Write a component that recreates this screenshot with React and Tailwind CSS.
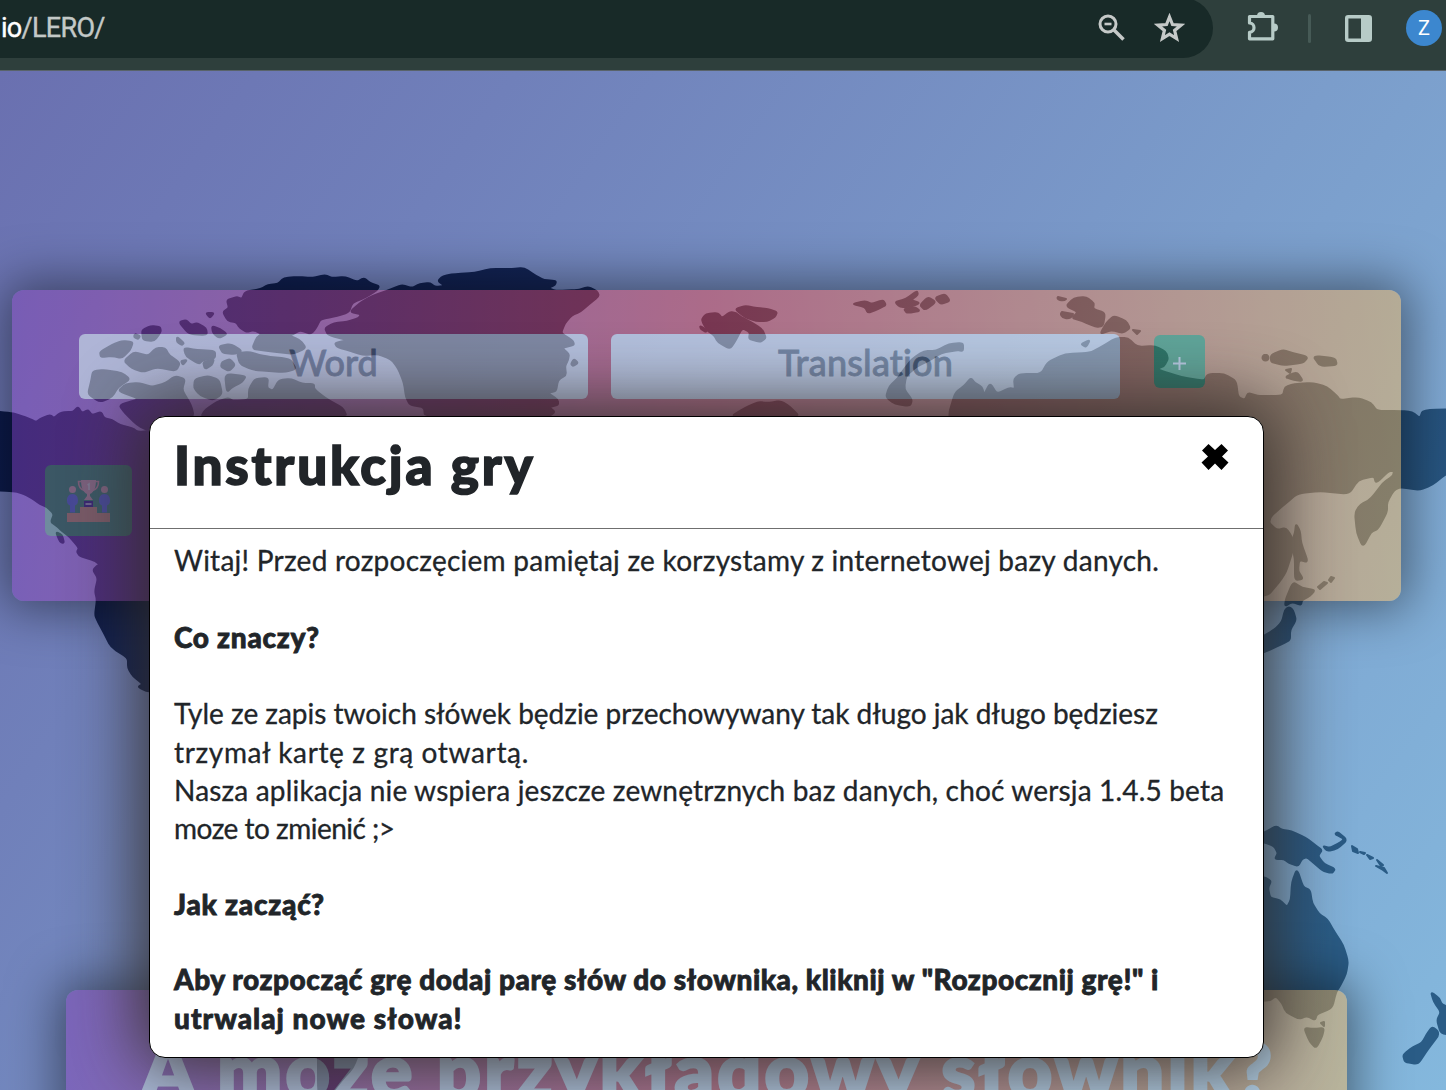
import React from "react";

const LAND = [
  // Alaska, Canada and the west coast
  "M-14 411 L12 413 L22 416 L30 419 L36 422 L42 418 L50 415 L54 418 L60 413 L66 412 L73 412 L78 407 L82 413 L88 410 L92 415 L101 412 L104 418 L112 420 L120 425 L132 428 L138 432 L150 431 L400 440 L400 720 L149 692 L138 687 L143 684 L133 676 L128 668 L128 658 L111 647 L105 635 L98 622 L95 615 L97 600 L95 591 L98 578 L93 570 L98 565 L102 568 L96 561 L80 556 L77 552 L79 548 L70 537 L62 531 L57 526 L51 522 L54 514 L47 507 L40 504 L33 499 L24 494 L14 491 L-14 490Z",
  "M56 532 L62 535 L64 543 L60 542Z",
  // Ellesmere
  "M261 289 L268 285 L278 284 L284 278 L298 277 L312 278 L325 275 L332 278 L345 277 L357 282 L364 278 L370 283 L379 286 L377 290 L366 297 L352 303 L349 312 L337 316 L326 318 L320 320 L316 328 L311 334 L300 330 L290 336 L278 332 L264 335 L254 330 L247 332 L240 328 L236 322 L228 321 L223 312 L229 308 L227 300 L237 297 L242 299 L245 292Z",
  // Greenland
  "M392 289 L402 285 L412 288 L420 284 L430 283 L435 287 L445 286 L438 281 L443 276 L455 274 L475 273 L490 269 L511 269 L524 268 L536 276 L544 280 L556 281 L555 285 L548 288 L556 291 L578 290 L588 287 L597 291 L599 296 L589 304 L580 312 L572 315 L565 323 L561 333 L567 337 L573 341 L574 345 L562 348 L569 354 L568 360 L565 366 L566 375 L558 380 L556 391 L548 393 L558 400 L558 405 L549 407 L555 412 L548 417 L425 417 L424 407 L410 405 L406 397 L404 383 L398 368 L391 359 L378 354 L363 355 L351 351 L337 347 L335 343 L347 340 L328 335 L325 328 L334 323 L347 322 L359 318 L361 314 L350 312 L360 303 L372 296Z",
  "M571 364 L574 359 L578 363 L573 366Z",
  "M257 337 L268 330 L285 334 L300 340 L306 348 L293 354 L270 351 L252 349Z",
  "M237 353 L250 352 L262 356 L290 359 L296 369 L285 372 L253 370 L240 364Z",
  "M100 352 L112 345 L122 341 L133 342 L130 350 L122 358 L112 356 L101 357Z",
  "M124 361 L134 352 L148 356 L156 348 L165 348 L169 355 L180 363 L176 371 L157 367 L143 372 L132 368Z",
  "M142 330 L151 326 L160 327 L161 332 L154 341 L143 340Z",
  "M179 322 L186 320 L191 325 L197 323 L206 328 L207 335 L189 334Z",
  "M212 326 L220 329 L227 334 L219 338 L213 333Z",
  "M206 313 L214 313 L210 318Z",
  "M184 348 L197 350 L215 351 L215 358 L203 360 L199 364 L186 356Z",
  "M219 346 L231 344 L242 351 L235 354 L223 353Z",
  "M177 337 L184 343 L182 345 L177 342Z",
  "M135 334 L140 336 L138 339 L134 337Z",
  "M222 362 L230 359 L235 365 L229 371 L221 367Z",
  "M203 362 L214 359 L212 365 L205 369Z",
  "M181 361 L187 360 L183 365Z",
  "M93 371 L105 370 L122 373 L130 379 L118 387 L112 397 L100 402 L88 394 L91 382Z",
  "M118 391 L126 384 L139 383 L152 387 L166 383 L175 376 L185 379 L182 390 L191 405 L194 417 L149 431 L137 425 L125 413 L119 405 L140 399Z",
  "M195 379 L208 376 L219 380 L222 394 L213 400 L200 395 L194 388Z",
  "M225 374 L246 376 L242 382 L232 387 L227 392Z",
  "M249 389 L255 379 L268 378 L267 388 L273 391 L279 380 L291 379 L302 384 L314 384 L314 389 L325 398 L343 408 L347 417 L201 417 L205 410 L217 402 L228 398 L233 401 L249 400Z",
  // Svalbard and Arctic islands
  "M702 319 L706 314 L718 313 L722 318 L730 312 L736 313 L741 317 L749 321 L762 329 L766 338 L760 342 L749 339 L750 332 L742 328 L736 340 L730 349 L718 342 L714 335 L708 331 L703 323Z",
  "M735 309 L745 306 L757 308 L768 309 L777 312 L775 317 L767 321 L756 321 L745 317Z",
  "M700 326 L707 330 L706 332 L701 329Z",
  "M852 304 L865 301 L872 304 L883 300 L886 305 L878 309 L868 313 L865 307Z",
  "M895 302 L906 299 L917 291 L918 295 L911 300 L920 303 L910 307 L900 307Z",
  "M904 309 L915 307 L920 311 L907 313Z",
  "M920 305 L928 297 L936 302 L925 310Z",
  "M935 298 L945 294 L950 301 L941 304Z",
  // Nordic coast
  "M963 343 L949 344 L936 351 L924 351 L912 359 L902 372 L898 378 L889 387 L886 397 L895 404 L910 406 L912 400 L904 389 L906 376 L916 367 L930 360 L941 353 L957 350 L963 351Z",
  "M730 417 L745 408 L758 402 L768 403 L781 401 L790 407 L800 417Z",
  // Novaya and Severnaya Zemlya
  "M1066 306 L1074 298 L1086 297 L1094 303 L1093 309 L1105 313 L1103 326 L1096 327 L1082 321 L1072 318 L1078 312Z",
  "M1100 334 L1107 322 L1114 316 L1126 321 L1130 328 L1123 333 L1111 330Z",
  "M1058 297 a4 2 0 1 0 8 2Z",
  "M1062 312 a6 4 0 1 0 11 2Z",
  "M1133 330 l7 1 l-3 3Z",
  "M1081 344 L1090 340 L1086 347Z",
  // Eurasia
  "M955 393 L964 386 L971 378 L975 383 L982 387 L984 395 L990 383 L997 394 L1009 388 L1015 389 L1014 379 L1020 374 L1041 374 L1048 362 L1065 354 L1090 353 L1103 346 L1116 338 L1128 338 L1137 347 L1155 346 L1166 352 L1168 359 L1164 366 L1157 369 L1165 372 L1181 377 L1204 381 L1208 374 L1224 374 L1236 381 L1238 397 L1245 400 L1248 393 L1259 396 L1283 396 L1285 387 L1294 384 L1313 383 L1327 387 L1337 396 L1340 400 L1358 398 L1371 403 L1377 411 L1401 411 L1412 412 L1420 418 L1423 410 L1466 409 L1466 461 L1446 474 L1432 485 L1419 490 L1401 487 L1394 490 L1387 502 L1387 512 L1378 529 L1371 532 L1363 547 L1357 533 L1355 513 L1360 505 L1371 499 L1383 483 L1393 476 L1394 471 L1389 471 L1376 483 L1374 476 L1358 480 L1349 494 L1322 491 L1298 493 L1285 504 L1271 516 L1269 523 L1277 530 L1286 528 L1292 537 L1293 550 L1285 575 L1264 600 L960 620 L948 417Z",
  "M1296 524 L1300 531 L1301 543 L1308 562 L1299 560 L1298 571 L1303 579 L1295 580 L1295 558 L1291 543 L1295 533Z",
  "M1293 582 L1302 588 L1315 590 L1310 596 L1302 600 L1301 605 L1292 602 L1285 606 L1286 599Z",
  "M1289 607 L1293 610 L1296 620 L1290 630 L1290 640 L1282 644 L1265 652 L1250 655 L1250 644 L1274 630 L1282 622 L1285 610Z",
  "M1318 587 l6 -5 l3 1 l-7 6Z", "M1329 580 l2 -3 l3 1 l-3 4Z",
  "M1271 355 L1283 350 L1293 353 L1308 357 L1303 363 L1283 365 L1271 362Z",
  "M1313 356 L1335 358 L1337 365 L1320 366Z", "M1264 355 a3 3 0 1 0 3 0Z", "M1285 377 L1297 372 L1303 381 L1294 380Z", "M1286 370 l5 -1 l-1 4Z",
  // New Guinea and neighbours
  "M1240 840 L1264 833 L1276 826 L1282 830 L1291 831 L1306 838 L1315 845 L1322 850 L1318 856 L1324 864 L1335 869 L1332 873 L1323 871 L1307 857 L1302 859 L1298 866 L1289 863 L1284 859 L1275 859 L1278 853 L1274 846 L1264 842 L1240 842Z",
  "M1323 846 L1330 848 L1341 842 L1344 839 L1335 834 L1338 832 L1347 840 L1337 849 L1327 851Z",
  "M1352 846 l5 3 l1 4 l-5 -2Z", "M1360 852 l5 1 l-1 1Z", "M1367 855 l6 3 l-3 1Z", "M1377 860 l6 5 l-2 1Z", "M1376 866 l8 2 l3 5 l-4 -3Z",
  // Australia and Tasmania
  "M1240 877 L1264 877 L1271 881 L1268 888 L1270 898 L1280 900 L1287 907 L1291 900 L1292 882 L1297 869 L1303 887 L1310 890 L1312 903 L1319 914 L1327 919 L1334 931 L1343 945 L1348 961 L1346 974 L1340 986 L1336 992 L1332 1008 L1317 1014 L1315 1020 L1307 1016 L1299 1019 L1286 1012 L1282 1003 L1276 996 L1269 1001 L1240 1000Z",
  "M1304 1028 L1314 1029 L1324 1028 L1322 1037 L1316 1048 L1310 1042Z", "M1321 1023 l3 -1 l0 4Z",
  // New Zealand
  "M1431 992 L1439 998 L1442 1005 L1460 1010 L1460 1034 L1441 1034 L1437 1020 L1441 1012 L1434 1002Z",
  "M1432 1027 L1438 1031 L1438 1036 L1431 1045 L1426 1052 L1418 1064 L1405 1062 L1403 1055 L1413 1047 L1422 1043 L1427 1034Z",
  // Coast behind the lower card
  "M318 1040 L360 1050 L353 1068 L342 1080 L328 1098 L318 1098Z",
];

// Rounds an outline's corners: short curves with the vertices as controls, joined by straight runs.
function soften(d) {
  if (!d.includes("L")) return d;
  const n = d.match(/-?\d+/g).map(Number);
  const pts = [];
  for (let i = 0; i < n.length; i += 2) pts.push([n[i], n[i + 1]]);
  const mix = (a, b, t) => (a[0] + (b[0] - a[0]) * t).toFixed(1) + " " + (a[1] + (b[1] - a[1]) * t).toFixed(1);
  return (
    pts
      .map((p, i) => {
        const prev = pts[(i + pts.length - 1) % pts.length];
        const next = pts[(i + 1) % pts.length];
        return (i ? "L" : "M") + mix(p, prev, 0.3) + "Q" + p[0] + " " + p[1] + " " + mix(p, next, 0.3);
      })
      .join("") + "Z"
  );
}

function WorldMap() {
  return (
    <svg className="pointer-events-none absolute inset-0 -z-10 h-full w-full" viewBox="0 71 1446 1019" aria-hidden="true">
      <defs>
        <linearGradient id="land" gradientUnits="userSpaceOnUse" x1="0" y1="300" x2="1300" y2="1000">
          <stop offset="0" stopColor="#0c1a4c" />
          <stop offset="0.35" stopColor="#142556" />
          <stop offset="1" stopColor="#2a5c86" />
        </linearGradient>
      </defs>
      <g fill="url(#land)" stroke="url(#land)" strokeWidth="2" strokeLinejoin="round">
        {LAND.map((d, i) => (
          <path key={i} d={soften(d)} />
        ))}
      </g>
    </svg>
  );
}

function BrowserBar() {
  return (
    <header className="flex h-[71px] items-start justify-between border-b border-[#59636a] bg-[#2e3f3c]">
      <div className="-mt-0.5 flex h-[60px] w-[1213px] items-center rounded-r-full bg-[#182a28]">
        <div className="mt-px w-[1098px] whitespace-nowrap pl-px font-['Roboto','sans-serif'] text-[27px] tracking-[-0.7px] text-[#c3c9c7] [-webkit-text-stroke:0.4px]">
          <span className="text-white">io</span>/LERO/
        </div>
        <svg className="h-7 w-7" viewBox="0 0 28 28" fill="none" stroke="#c5c9c8">
          <circle cx="10" cy="10" r="8" strokeWidth="3" />
          <path d="M6.500 10h7" strokeWidth="2.600" />
          <path d="M16 16l9.500 9.500" strokeWidth="3.600" />
        </svg>
        <svg className="ml-[28px] h-[30px] w-[31px]" viewBox="0 0 31 30" fill="none" stroke="#c5c9c8" strokeWidth="3.200">
          <path d="M15.500 4l3 7.500 8.600.6-6.500 5.300 2 8.200-7.100-4.400-7.100 4.400 2-8.200-6.500-5.300 8.600-.6z" />
        </svg>
      </div>
      <div className="flex h-[56px] flex-1 items-center pl-[33px]">
        <svg className="-mt-1 h-[32px] w-[34px]" viewBox="0 0 34 32" fill="none" stroke="#b7cbc7" strokeWidth="3.200">
          <path d="M3.500 6.500h23.300v22.300H3.500v-6.500c6-.2 6-9 0-9.300z" strokeLinejoin="round" />
          <path d="M11 6a4 4 0 0 1 8 0zM28 13.500a4 4 0 0 1 0 8z" fill="#b7cbc7" stroke="none" />
        </svg>
        <div className="ml-[28px] h-[29px] w-[3px] rounded bg-[#465a56]" />
        <svg className="ml-[34px] h-[27px] w-[27px]" viewBox="0 0 27 27">
          <rect x="1.700" y="1.700" width="23.600" height="23.600" rx="1.500" fill="none" stroke="#b7cbc7" strokeWidth="3.400" />
          <path d="M16 1h10v25H16z" fill="#b7cbc7" />
        </svg>
        <div className="ml-[34px] flex h-9 w-9 shrink-0 items-center justify-center rounded-full bg-[#3c87cf] font-['Roboto','sans-serif'] text-[20px] text-white">Z</div>
      </div>
    </header>
  );
}

function TrophyIcon() {
  return (
    <svg className="mt-px h-[43px] w-[43px]" viewBox="0 0 43 43">
      <path d="M0 33h13v-6h17v6h13v9H0z" fill="#fba487" />
      <circle cx="5.500" cy="9.500" r="3.500" fill="#ffb3b6" />
      <circle cx="37.500" cy="9.500" r="3.500" fill="#ffb3b6" />
      <path d="M5.500 14c-4 0-5.500 3-5.500 6.500 0 3 1 4 3 5v7h5v-7c2-1 3-2 3-5 0-3.500-1.500-6.500-5.500-6.500zM37.500 14c-4 0-5.500 3-5.500 6.500 0 3 1 4 3 5v7h5v-7c2-1 3-2 3-5 0-3.500-1.500-6.500-5.500-6.500z" fill="#8c80ec" />
      <path d="M14.500 1.500h-3c0 5 2 8 6 9M28.500 1.500h3c0 5-2 8-6 9" fill="none" stroke="#ffaaab" strokeWidth="1.600" />
      <path d="M14 0h15c0 8-2 12-6 14v2l3 4h-9l3-4v-2c-4-2-6-6-6-14z" fill="#ffb3b6" />
      <path d="M20.500 5l1.500-1v6" fill="none" stroke="#ffe8e4" strokeWidth="1.500" />
      <path d="M17 21h9v6h-9z" fill="#70359c" />
      <path d="M18.500 24h6" stroke="#ffe4ec" strokeWidth="1.500" />
    </svg>
  );
}

const CARD =
  "rounded-xl bg-[linear-gradient(90deg,#873fb8_0%,#ef4446_50%,#f8b552_100%)] opacity-45 shadow-[0_0_50px_8px_#000]";

const LINE = "block h-[38.2px] whitespace-nowrap leading-[38.2px]";

function Instructions() {
  return (
    <section className="absolute left-[149px] top-[345px] h-[642px] w-[1115px] rounded-2xl border border-black bg-white font-['Lato','sans-serif'] text-[#212529] shadow-[0_0_70px_10px_rgba(50,45,40,0.92)]">
      <div className="flex h-[112px] items-start justify-between border-b border-[#6f6f6f] pl-6 pr-[34px]">
        <h1 className="mt-[15px] whitespace-nowrap text-[53px] font-black leading-[66px] tracking-[2.8px] [-webkit-text-stroke:1.6px]">Instrukcja gry</h1>
        <button className="mt-[26px]" aria-label="Zamknij">
          <svg className="h-[28px] w-[28px]" viewBox="0 0 28 28">
            <path d="M7.500 1L14 7l6.500-6L27 7.500 21 13.500l6.500 6L20.500 27 14 20.500 7.500 27 .5 19.500l6.500-6-6-6z" fill="#000" />
          </svg>
        </button>
      </div>
      <div className="pl-6 pt-[12px] text-[28px] [-webkit-text-stroke:0.3px]">
        <p>
          <span className={LINE + " tracking-[0.25px]"}>Witaj! Przed rozpoczęciem pamiętaj ze korzystamy z internetowej bazy danych.</span>
        </p>
        <p className="mt-[38.5px] font-black [-webkit-text-stroke:0.8px]">
          <span className={LINE + " tracking-[0.72px]"}>Co znaczy?</span>
        </p>
        <p className="mt-[38.5px]">
          <span className={LINE + " tracking-[-0.02px]"}>Tyle ze zapis twoich słówek będzie przechowywany tak długo jak długo będziesz</span>
          <span className={LINE + " tracking-[0.64px]"}>trzymał kartę z grą otwartą.</span>
          <span className={LINE + " tracking-[0.17px]"}>Nasza aplikacja nie wspiera jeszcze zewnętrznych baz danych, choć wersja 1.4.5 beta</span>
          <span className={LINE + " tracking-[-0.5px]"}>moze to zmienić ;&gt;</span>
        </p>
        <p className="mt-[38px] font-black [-webkit-text-stroke:0.8px]">
          <span className={LINE + " tracking-[0.8px]"}>Jak zacząć?</span>
        </p>
        <p className="mt-[37px] font-black [-webkit-text-stroke:0.8px]">
          <span className={LINE + " tracking-[0.56px]"}>Aby rozpocząć grę dodaj parę słów do słownika, kliknij w "Rozpocznij grę!" i</span>
          <span className={LINE + " tracking-[1.05px]"}>utrwalaj nowe słowa!</span>
        </p>
      </div>
    </section>
  );
}

export default function App() {
  return (
    <div className="h-[1090px] w-[1446px] overflow-hidden">
      <BrowserBar />
      <main className="relative isolate flex h-[1019px] flex-col overflow-hidden bg-[linear-gradient(125deg,#6a70b0_0%,#7080ba_24%,#7b9dcb_62%,#84b8dd_100%)] font-['Lato','sans-serif']">
        <WorldMap />
        <div className={CARD + " ml-3 mt-[219px] h-[311px] w-[1389px] shrink-0 pl-[33px] pt-11"}>
          <div className="flex items-start pl-[34px]">
            <div className="flex h-[65px] w-[509px] justify-center rounded-md bg-white pt-[5px] text-[36px] font-medium leading-[46px] text-[#6c757d] [-webkit-text-stroke:0.8px]">Word</div>
            <div className="ml-[23px] flex h-[65px] w-[509px] justify-center rounded-md bg-white pt-[5px] text-[36px] font-medium leading-[46px] tracking-[0.2px] text-[#6c757d] [-webkit-text-stroke:0.8px]">Translation</div>
            <button className="ml-[34px] mt-px flex h-[53px] w-[51px] items-center justify-center rounded-md bg-[#3eac5c]">
              <svg className="mt-1 h-[13px] w-[13px]" viewBox="0 0 13 13" stroke="#fff" strokeWidth="2">
                <path d="M6.500 0v13M0 6.500h13" />
              </svg>
            </button>
          </div>
          <button className="mt-[66px] flex h-[71px] w-[87px] items-center justify-center rounded-md bg-[#729f80]">
            <TrophyIcon />
          </button>
        </div>
        <div className={CARD + " ml-[66px] mt-[389px] h-[300px] w-[1281px] shrink-0 pl-[75px] pt-[32px]"}>
          <h2 className="whitespace-nowrap text-[77px] font-black leading-[92px] tracking-[3.3px] text-[#f2faff] [-webkit-text-stroke:3px]">A może przykładowy słownik?</h2>
        </div>
        <Instructions />
      </main>
    </div>
  );
}
